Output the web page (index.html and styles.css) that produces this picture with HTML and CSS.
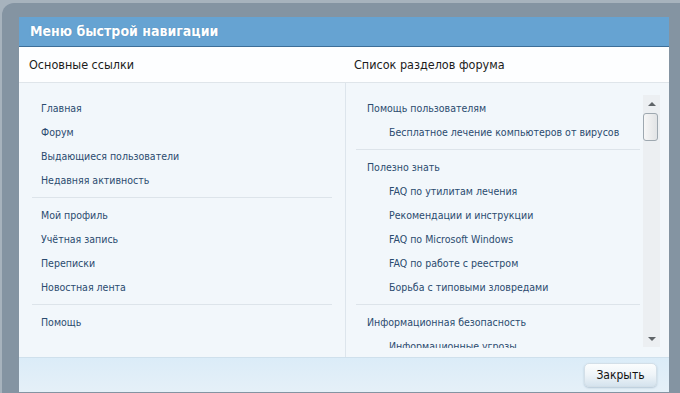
FILE: index.html
```html
<!DOCTYPE html>
<html lang="ru">
<head>
<meta charset="utf-8">
<title>Меню быстрой навигации</title>
<link rel="stylesheet" href="styles.css">
</head>
<body>
<div class="page">
  <div class="dialog">
    <div class="dialog-head">Меню быстрой навигации</div>
    <div class="cols">
      <div class="col col-left">
        <div class="col-title">Основные ссылки</div>
        <div class="col-body">
          <ul class="group">
            <li><a href="#">Главная</a></li>
            <li><a href="#">Форум</a></li>
            <li><a href="#">Выдающиеся пользователи</a></li>
            <li><a href="#">Недавняя активность</a></li>
          </ul>
          <ul class="group">
            <li><a href="#">Мой профиль</a></li>
            <li><a href="#">Учётная запись</a></li>
            <li><a href="#">Переписки</a></li>
            <li><a href="#">Новостная лента</a></li>
          </ul>
          <ul class="group">
            <li><a href="#">Помощь</a></li>
          </ul>
        </div>
      </div>
      <div class="col col-right">
        <div class="col-title">Список разделов форума</div>
        <div class="col-body">
          <div class="scroll">
            <div class="scroll-list">
              <ul class="group">
                <li><a href="#">Помощь пользователям</a></li>
                <li class="sub"><a href="#">Бесплатное лечение компьютеров от вирусов</a></li>
              </ul>
              <ul class="group">
                <li><a href="#">Полезно знать</a></li>
                <li class="sub"><a href="#">FAQ по утилитам лечения</a></li>
                <li class="sub"><a href="#">Рекомендации и инструкции</a></li>
                <li class="sub"><a href="#">FAQ по Microsoft Windows</a></li>
                <li class="sub"><a href="#">FAQ по работе с реестром</a></li>
                <li class="sub"><a href="#">Борьба с типовыми зловредами</a></li>
              </ul>
              <ul class="group">
                <li><a href="#">Информационная безопасность</a></li>
                <li class="sub"><a href="#">Информационные угрозы</a></li>
              </ul>
            </div>
            <div class="scrollbar">
              <div class="sb-btn"><span class="tri-up"></span></div>
              <div class="sb-track"><div class="sb-thumb"></div></div>
              <div class="sb-btn"><span class="tri-down"></span></div>
            </div>
          </div>
        </div>
      </div>
    </div>
    <div class="dialog-foot">
      <button class="btn" type="button">Закрыть</button>
    </div>
  </div>
</div>
</body>
</html>
```
FILE: styles.css
```css
* { box-sizing: border-box; }
html, body { margin: 0; padding: 0; }
body {
  width: 680px;
  height: 393px;
  overflow: hidden;
  background: #a7b3bd;
  font-family: "DejaVu Sans Condensed", "DejaVu Sans", sans-serif;
  font-stretch: condensed;
}
.page {
  margin: 3px 0 0 2px;
  height: 390px;
  background: #8494a2;
  border-top-left-radius: 12px;
  padding: 14px 0 0 17px;
}
.dialog {
  width: 650px;
  height: 375px;
  display: flex;
  flex-direction: column;
  background: #f2f7fb;
}
.dialog-head {
  height: 30px;
  background: #66a3d2;
  border-bottom: 1px solid #3d6e98;
  color: #fff;
  font-weight: bold;
  font-size: 14px;
  line-height: 29px;
  padding-left: 11px;
  text-shadow: 0 0 1px rgba(40, 80, 120, 0.4);
}
.cols {
  flex: 1;
  display: grid;
  grid-template-columns: 326px 324px;
  min-height: 0;
}
.col { display: flex; flex-direction: column; min-height: 0; }
.col-title {
  height: 36px;
  background: #fdfeff;
  border-bottom: 1px solid #dfe5ea;
  font-size: 12.5px;
  line-height: 36px;
  color: #1c1c1c;
  padding-left: 10px;
}
.col-right .col-title { padding-left: 9px; }
.col-body { flex: 1; min-height: 0; }
.col-left .col-body { padding: 8px 13px 0; }
.col-right .col-body {
  border-left: 1px solid #dde5ec;
  padding: 8px 9px 9px 0;
}
.group {
  list-style: none;
  margin: 0;
  padding: 5px 0;
}
.group + .group { border-top: 1px solid #dde4ea; }
.group li {
  height: 24px;
  line-height: 24px;
  font-size: 10.5px;
  padding-left: 9px;
  white-space: nowrap;
}
.group a { color: #2b4b6f; text-decoration: none; }
.scroll {
  height: 257px;
  display: flex;
}
.scroll-list {
  flex: 1;
  overflow: hidden;
  padding: 0 3px 0 10px;
}
.scroll-list .group li { padding-left: 11px; }
.scroll-list .group li.sub { padding-left: 33px; }
.scrollbar {
  width: 17px;
  margin: 4px 0 1px;
  display: flex;
  flex-direction: column;
  background: #eceff2;
}
.sb-btn {
  height: 17px;
  display: flex;
  align-items: center;
  justify-content: center;
}
.tri-up, .tri-down {
  width: 0; height: 0;
  border-left: 4px solid transparent;
  border-right: 4px solid transparent;
}
.tri-up { border-bottom: 4px solid #5f6468; }
.tri-down { border-top: 4px solid #5f6468; }
.sb-track { flex: 1; padding: 1px 2px 0 0; }
.sb-thumb {
  height: 28px;
  border: 1px solid #9ea8b0;
  border-radius: 3px;
  background: linear-gradient(to right, #f7f7f7, #e1e3e5);
}
.dialog-foot {
  height: 35px;
  border-top: 1px solid #cfe0ec;
  background: linear-gradient(#dbecf8, #e5f0f8);
  display: flex;
  justify-content: flex-end;
  align-items: flex-start;
  padding: 5px 12px 0 0;
}
.btn {
  width: 73px;
  height: 24px;
  border: 1px solid #d3dfe8;
  border-radius: 5px;
  background: linear-gradient(#fbfdfe, #eef4f8 50%, #d5e3ee);
  box-shadow: 0 1px 2px rgba(90, 120, 150, 0.35);
  font-family: "DejaVu Sans Condensed", "DejaVu Sans", sans-serif;
  font-stretch: condensed;
  font-size: 12px;
  color: #111;
  padding: 0;
}
```
